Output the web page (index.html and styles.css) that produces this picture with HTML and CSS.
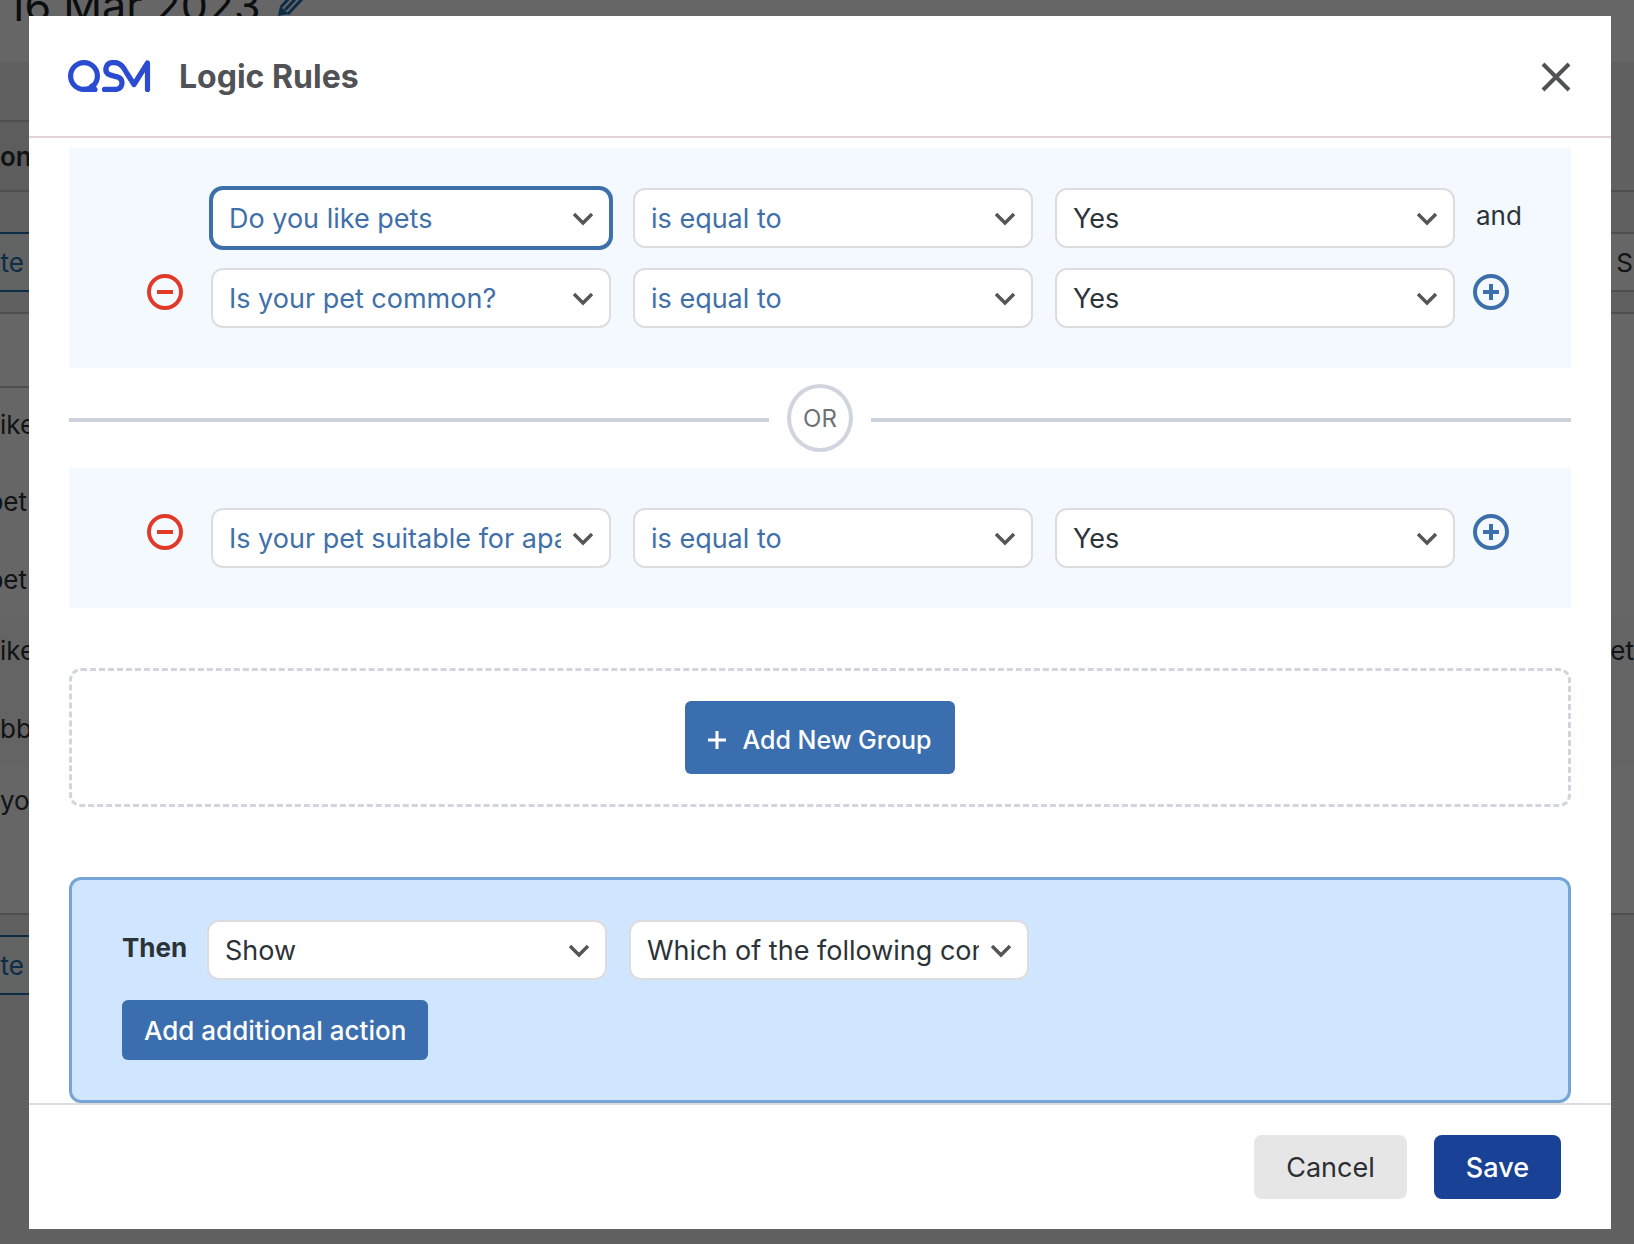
FILE: index.html
```html
<!DOCTYPE html>
<html lang="en">
<head>
<meta charset="utf-8">
<meta name="viewport" content="width=device-width, initial-scale=1">
<title>Logic Rules</title>
<link rel="stylesheet" href="styles.css">
</head>
<body>
<svg class="sprite" aria-hidden="true">
  <symbol id="chevron" viewBox="0 0 22 14"><path d="M2 2l9 9 9-9" fill="none" stroke="currentColor" stroke-width="3.400"/></symbol>
  <symbol id="minus" viewBox="0 0 36 36"><circle cx="18" cy="18" r="16" fill="none" stroke="currentColor" stroke-width="4"/><path d="M10 18h16" stroke="currentColor" stroke-width="4"/></symbol>
  <symbol id="plus" viewBox="0 0 36 36"><circle cx="18" cy="18" r="16" fill="none" stroke="currentColor" stroke-width="4"/><path d="M10 18h16M18 10v16" stroke="currentColor" stroke-width="4"/></symbol>
</svg>

<div class="page" aria-hidden="true">
  <header class="page-head">
    <span class="page-title">16 Mar 2023</span>
    <svg class="pencil" width="30" height="30" viewBox="0 0 30 30"><path d="M1 29l2-10 9 8z" fill="currentColor"/><path d="M4 20L20 3q2-2 4 0l3 3q2 2 0 4L11 27M8 23L23 7" fill="none" stroke="currentColor" stroke-width="3"/></svg>
  </header>
  <div class="page-columns">
    <div class="col col-left">
      <div class="cell toolbar"></div>
      <div class="cell heading line">ont</div>
      <div class="cell bar line"><span class="page-btn">te</span></div>
      <div class="cell label line"></div>
      <div class="cell first line">ike</div>
      <div class="cell tall end">pet</div>
      <div class="cell first end">pet</div>
      <div class="cell short striped">ike</div>
      <div class="cell tall striped">bb</div>
      <div class="cell last">you</div>
      <div class="cell bar bar-bottom line"><span class="page-btn">te</span></div>
    </div>
    <div class="col col-right">
      <div class="cell toolbar"></div>
      <div class="cell heading"></div>
      <div class="cell bar line"><span class="page-btn page-field">S</span></div>
      <div class="cell label line"></div>
      <div class="cell first"></div>
      <div class="cell tall"></div>
      <div class="cell first"></div>
      <div class="cell short striped end">pet</div>
      <div class="cell tall striped"></div>
      <div class="cell last"></div>
      <div class="cell bar line"></div>
    </div>
  </div>
</div>

<div class="overlay">
  <section class="modal" role="dialog" aria-labelledby="modal-title">
    <header class="modal-head">
      <svg class="logo" width="84" height="36" viewBox="0 0 84 36" role="img" aria-label="QSM">
        <g fill="none" stroke="currentColor" stroke-width="5.200" stroke-linecap="round" stroke-linejoin="round">
          <circle cx="17" cy="17" r="13.400"/>
          <path d="M17 30.400H28L25 27"/>
          <path d="M37.500 30.400H49.500A6.500 6.500 0 0 0 52 18.500C49 17 44 17 41 15A6.500 6.500 0 0 1 45 3.700H48C54 4 57 9 60 14.500L67 25.500L80.500 4V30.400"/>
        </g>
      </svg>
      <h1 id="modal-title">Logic Rules</h1>
      <button class="close" type="button" aria-label="Close"><svg width="32" height="32" viewBox="0 0 32 32"><path d="M3 3l26 26M29 3L3 29" stroke="currentColor" stroke-width="4"/></svg></button>
    </header>

    <div class="modal-body">
      <div class="group">
        <div class="rule">
          <div class="select is-link is-active"><select aria-label="Question"><option>Do you like pets</option></select><svg><use href="#chevron"/></svg></div>
          <div class="select is-link"><select aria-label="Condition"><option>is equal to</option></select><svg><use href="#chevron"/></svg></div>
          <div class="select"><select aria-label="Answer"><option>Yes</option></select><svg><use href="#chevron"/></svg></div>
          <span class="joiner">and</span>
        </div>
        <div class="rule">
          <button class="icon-btn remove" type="button" aria-label="Remove rule"><svg><use href="#minus"/></svg></button>
          <div class="select is-link"><select aria-label="Question"><option>Is your pet common?</option></select><svg><use href="#chevron"/></svg></div>
          <div class="select is-link"><select aria-label="Condition"><option>is equal to</option></select><svg><use href="#chevron"/></svg></div>
          <div class="select"><select aria-label="Answer"><option>Yes</option></select><svg><use href="#chevron"/></svg></div>
          <button class="icon-btn add" type="button" aria-label="Add rule"><svg><use href="#plus"/></svg></button>
        </div>
      </div>

      <div class="divider"><span>OR</span></div>

      <div class="group">
        <div class="rule">
          <button class="icon-btn remove" type="button" aria-label="Remove rule"><svg><use href="#minus"/></svg></button>
          <div class="select is-link"><select aria-label="Question"><option>Is your pet suitable for apartments?</option></select><svg><use href="#chevron"/></svg></div>
          <div class="select is-link"><select aria-label="Condition"><option>is equal to</option></select><svg><use href="#chevron"/></svg></div>
          <div class="select"><select aria-label="Answer"><option>Yes</option></select><svg><use href="#chevron"/></svg></div>
          <button class="icon-btn add" type="button" aria-label="Add rule"><svg><use href="#plus"/></svg></button>
        </div>
      </div>

      <div class="new-group">
        <button class="btn btn-group" type="button"><svg width="18" height="18" viewBox="0 0 18 18"><path d="M0 9h18M9 0v18" stroke="currentColor" stroke-width="3"/></svg>Add New Group</button>
      </div>

      <div class="actions">
        <div class="action">
          <label for="action-type">Then</label>
          <div class="select"><select id="action-type"><option>Show</option></select><svg><use href="#chevron"/></svg></div>
          <div class="select"><select aria-label="Target question"><option>Which of the following comes next?</option></select><svg><use href="#chevron"/></svg></div>
        </div>
        <button class="btn btn-action" type="button">Add additional action</button>
      </div>
    </div>

    <footer class="modal-foot">
      <button class="btn btn-cancel" type="button">Cancel</button>
      <button class="btn btn-save" type="button">Save</button>
    </footer>
  </section>
</div>
</body>
</html>
```
FILE: styles.css
```css
* { box-sizing: border-box; }
body {
  margin: 0;
  min-height: 100vh;
  background: #f0f0f1;
  color: #2c3338;
  font: 26px/32px Inter, "Liberation Sans", sans-serif;
  overflow: hidden;
}
button, select { font: inherit; }
button { border: 0; padding: 0; cursor: pointer; }
svg { display: block; flex: none; }
.sprite { position: absolute; width: 0; height: 0; }

/* Page behind the dialog */
.page { min-height: 100vh; }
.page-head {
  display: flex;
  gap: 16px;
  height: 62px;
  padding-left: 7px;
  background: #fff;
  color: #1d2327;
}
.page-title { font-size: 43px; line-height: 44px; margin-top: -17px; }
.pencil { margin-top: -13px; color: #2271b1; }
.page-columns { display: flex; justify-content: space-between; }
.col { width: 23px; overflow: hidden; }
.col-left { width: 29px; }
.cell { display: flex; align-items: center; padding-top: 2px; background: #fff; }
.cell.end { justify-content: flex-end; padding-right: 2px; }
.col-right .cell.end { padding-right: 0; }
.line { border-top: 2px solid #c3c4c7; }
.cell.toolbar { height: 58px; background: #f0f0f1; }
.cell.heading { height: 70px; background: #e8e8e9; font-weight: 600; }
.col-right .toolbar, .col-right .heading { background: #f0f0f1; }
.cell.bar { height: 122px; align-items: flex-end; padding-bottom: 20px; background: #f0f0f1; }
.cell.bar-bottom { align-items: flex-start; padding-top: 20px; }
.cell.label { height: 74px; }
.cell.first { height: 74px; }
.cell.tall { height: 82px; }
.cell.short { height: 67px; }
.cell.last { height: 148px; align-items: flex-start; padding-top: 20px; }
.cell.striped { background: #f9f9f9; }
.cell.tall.striped { padding-top: 10px; }
.page-btn {
  width: 100%;
  height: 60px;
  border: solid #2271b1;
  border-width: 2px 0;
  background: #f6f7f7;
  padding-right: 5px;
  color: #2271b1;
  line-height: 57px;
  text-align: right;
}
.page-field { border-color: #c3c4c7; background: #fff; padding-right: 1px; color: #2c3338; }

/* Dialog */
.overlay {
  position: fixed;
  inset: 0;
  display: flex;
  padding: 16px 23px 15px 29px;
  background: rgba(0, 0, 0, .6);
}
.modal { flex: 1; display: flex; flex-direction: column; min-width: 0; background: #fff; }
.modal-head {
  display: flex;
  align-items: center;
  height: 122px;
  padding: 2px 39px 0 38px;
  border-bottom: 2px solid #e2d3d7;
  color: #50575e;
}
.logo { color: #2b4bd0; }
.modal-head h1 { margin: 0 auto 0 28px; color: #505256; font-size: 32px; line-height: 40px; font-weight: 700; }
.close { background: none; color: #505256; }
.modal-body { flex: 1; min-height: 0; padding: 10px 40px 0; overflow-y: auto; scrollbar-width: none; }

.group { display: grid; gap: 20px; padding: 40px 50px 40px 78px; background: #f3f9ff; }
.rule { display: flex; }
.rule .select { flex: 1; }
.rule .select + .select, .action .select + .select { margin-left: 22px; }
.rule > .select:first-child { margin-left: 64px; }
.icon-btn { flex: none; height: 48px; background: none; }
.icon-btn svg { width: 36px; height: 36px; }
.remove { margin-right: 28px; color: #e03a2b; }
.add { width: 48px; margin-left: 18px; color: #3d70ab; }
.joiner { width: 48px; margin-left: 18px; padding-left: 3px; line-height: 56px; }

.select { position: relative; min-width: 0; color: #2c3338; }
.select select {
  appearance: none;
  display: block;
  width: 100%;
  height: 60px;
  padding: 2px 48px 0 16px;
  border: 2px solid #dddddf;
  border-radius: 12px;
  background: #fff;
  color: inherit;
  font-size: 27px;
}
.select svg {
  position: absolute;
  right: 17px;
  top: 24px;
  width: 22px;
  height: 14px;
  color: #555;
  pointer-events: none;
}
.is-link { color: #3f70a8; }
.is-active select { border-color: #3d70ab; box-shadow: 0 0 0 2px #3d70ab; }

.divider { display: flex; align-items: center; gap: 18px; height: 100px; }
.divider::before, .divider::after { content: ""; flex: 1; height: 4px; margin-top: 4px; background: #cbd2da; }
.divider span {
  width: 66px;
  height: 68px;
  border: 4px solid #cfd4de;
  border-radius: 50%;
  color: #6f7277;
  font-size: 24px;
  line-height: 62px;
  text-align: center;
}

.btn { display: inline-flex; align-items: center; justify-content: center; padding-top: 2px; border-radius: 6px; background: #3a6eae; color: #fff; font-weight: 500; }
.new-group {
  display: flex;
  justify-content: center;
  margin: 60px 0 70px;
  padding: 30px;
  border: 3px dashed #d3d5de;
  border-radius: 12px;
}
.btn-group { gap: 16px; height: 73px; padding: 4px 23px 0; font-size: 25px; }
.actions { padding: 40px 50px; border: 3px solid #75a4d5; border-radius: 12px; background: #d0e6fe; }
.action { display: flex; margin-bottom: 20px; }
.action label { width: 85px; font-weight: 700; line-height: 56px; }
.action .select { flex: 0 1 400px; }
.btn-action { height: 60px; padding: 2px 22px 0; }

.modal-foot {
  display: flex;
  justify-content: flex-end;
  gap: 27px;
  padding: 30px 50px;
  border-top: 2px solid #dcdcde;
}
.modal-foot .btn { height: 64px; padding: 2px 32px 0; border-radius: 8px; font-size: 27px; }
.modal-foot .btn-cancel { background: #e6e6e6; color: #2c2f31; font-weight: 400; }
.modal-foot .btn-save { background: #194297; }
```
